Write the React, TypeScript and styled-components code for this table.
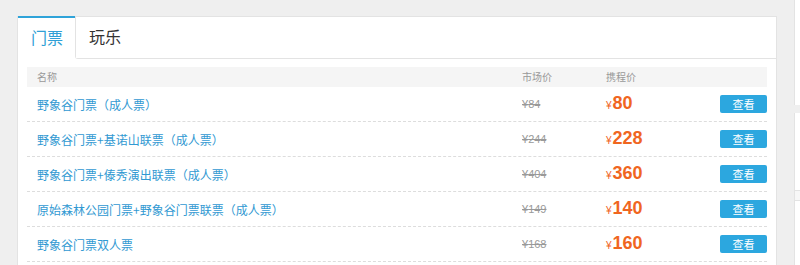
import React from 'react'
import styled, { createGlobalStyle } from 'styled-components'

const GlobalStyle = createGlobalStyle`
  html, body {
    margin: 0;
    padding: 0;
    background-color: #efefef;
    overflow: hidden;
  }
  body {
    font-family: "Noto Sans CJK SC", "Liberation Sans", sans-serif;
  }
`;

const StyledPage = styled.div`
  display: flex;
  align-items: flex-start;
  width: 800px;
  height: 265px;
  overflow: hidden;
`;

const StyledPanel = styled.div`
  flex-shrink: 0;
  margin: 16px 0 0 17px;
  width: 758px;
  height: 300px;
  background-color: #ffffff;
  border: 1px solid #e3e3e3;
  border-top: none;
`;

const StyledTabs = styled.div`
  display: flex;
  height: 43px;
`;

const StyledTab = styled.div<{ active?: boolean }>`
  box-sizing: border-box;
  height: 100%;
  padding: 0 12px 0 13px;
  font-size: 16px;
  line-height: 38px;
  color: ${({ active }) => active ? '#2f9fd6' : '#333333'};
  border-top: ${({ active }) => active ? '2px solid #2fa3d9' : 'none'};
  background-color: #ffffff;
`;

const StyledTabRest = styled.div`
  box-sizing: border-box;
  flex: 1;
  display: flex;
  height: 43px;
  border-top: 1px solid #e3e3e3;
  border-left: 1px solid #e3e3e3;
  border-bottom: 1px solid #e3e3e3;
  border-bottom-left-radius: 3px;
`;

const StyledTable = styled.div`
  margin: 8px 9px 0 9px;
`;

const StyledHeadRow = styled.div`
  display: grid;
  grid-template-columns: 485px 84px 1fr 47px;
  padding-left: 10px;
  height: 20px;
  background-color: #f5f5f5;
  font-size: 10px;
  line-height: 20px;
  color: #999999;
`;

const StyledRow = styled.div`
  display: grid;
  grid-template-columns: 485px 84px 1fr 47px;
  align-items: center;
  padding-left: 10px;
  height: 34px;
  border-bottom: 1px dashed #dddddd;
`;

const StyledName = styled.a`
  font-size: 12px;
  color: #3199d2;
  text-decoration: none;
`;

const StyledMarket = styled.span`
  font-family: "Liberation Sans", "Noto Sans CJK SC", sans-serif;
  font-size: 11px;
  color: #999999;
  text-decoration: line-through;
`;

const StyledPrice = styled.span`
  font-family: "Liberation Sans", sans-serif;
  color: #f0661f;
  line-height: 20px;
`;

const StyledYen = styled.span`
  font-size: 10px;
  margin-right: 1px;
`;

const StyledNum = styled.span`
  font-size: 18px;
  font-weight: bold;
`;

const StyledButton = styled.button`
  width: 47px;
  height: 18px;
  padding: 0;
  border: none;
  border-radius: 2px;
  background-color: #2ca7df;
  color: #ffffff;
  font-family: "Noto Sans CJK SC", sans-serif;
  font-size: 11px;
  line-height: 18px;
  cursor: pointer;
`;

const StyledSide = styled.div`
  flex-shrink: 0;
  margin-left: 17px;
  display: flex;
  flex-direction: column;
  gap: 8px;
  width: 200px;
`;

const StyledSideBox = styled.div<{ h: number }>`
  height: ${({ h }) => h}px;
  background-color: #ffffff;
  border-left: 1px solid #e3e3e3;
`;

const StyledSideLine = styled.div`
  margin-top: 77px;
  height: 9px;
  background-color: #f7f7f7;
  border-top: 1px solid #e3e3e3;
  border-bottom: 1px solid #e3e3e3;
`;

const tickets = [
  { name: '野象谷门票（成人票）', market: 84, price: 80 },
  { name: '野象谷门票+基诺山联票（成人票）', market: 244, price: 228 },
  { name: '野象谷门票+傣秀演出联票（成人票）', market: 404, price: 360 },
  { name: '原始森林公园门票+野象谷门票联票（成人票）', market: 149, price: 140 },
  { name: '野象谷门票双人票', market: 168, price: 160 },
];

const App: React.FC = () => {
  return (
    <>
      <GlobalStyle />
      <StyledPage>
        <StyledPanel>
          <StyledTabs>
            <StyledTab active>门票</StyledTab>
            <StyledTabRest>
              <StyledTab>玩乐</StyledTab>
            </StyledTabRest>
          </StyledTabs>
          <StyledTable>
            <StyledHeadRow>
              <span>名称</span>
              <span>市场价</span>
              <span>携程价</span>
              <span />
            </StyledHeadRow>
            {tickets.map((t) => (
              <StyledRow key={t.name}>
                <StyledName href="#">{t.name}</StyledName>
                <StyledMarket>¥{t.market}</StyledMarket>
                <StyledPrice>
                  <StyledYen>¥</StyledYen>
                  <StyledNum>{t.price}</StyledNum>
                </StyledPrice>
                <StyledButton>查看</StyledButton>
              </StyledRow>
            ))}
          </StyledTable>
        </StyledPanel>
        <StyledSide>
          <StyledSideBox h={105} />
          <StyledSideBox h={200}>
            <StyledSideLine />
          </StyledSideBox>
        </StyledSide>
      </StyledPage>
    </>
  )
}

export default App
